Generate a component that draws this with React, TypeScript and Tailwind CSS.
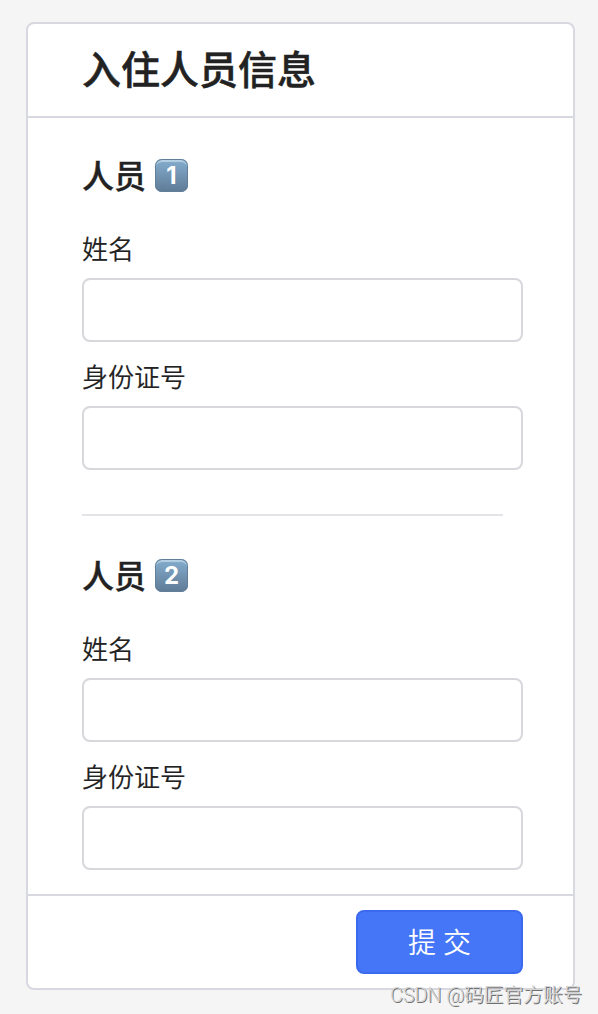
import React from "react";

function Keycap({ n }: { n: number }) {
  return (
    <span className="mt-px flex h-[33px] w-[33px] items-center justify-center rounded-[7px] bg-linear-to-b from-[#7fa6c6] from-15% to-[#5f7b96] pt-px font-['Inter',sans-serif] text-[24px] leading-none font-bold text-white shadow-[inset_0_0_0_1px_#627f9a,inset_0_3px_1px_#b4d0e2] [-webkit-text-stroke:0]">
      {n}
    </span>
  );
}

function Field({ label }: { label: string }) {
  return (
    <label className="block h-32">
      <span className="block h-[50px] pt-[2px] text-[26px] leading-[36px] font-[350] [-webkit-text-stroke:0.15px]">{label}</span>
      <input className="block h-16 w-[441px] rounded-lg border-2 border-[#d7d7dc] bg-white px-4 text-[26px] outline-none" />
    </label>
  );
}

function Person({ n }: { n: number }) {
  return (
    <section>
      <h2 className="flex h-[70px] items-start gap-[9px] text-[32px] font-medium [-webkit-text-stroke:0.4px]">
        <span className="-mt-px leading-[34px]">人员</span>
        <Keycap n={n} />
      </h2>
      <Field label="姓名" />
      <Field label="身份证号" />
    </section>
  );
}

export default function App() {
  return (
    <div className="relative h-[1014px] w-[598px] bg-[#f5f5f5] pt-[22px] pl-[26px] font-['Noto_Sans_CJK_SC',sans-serif] text-[#222]">
      <main className="flex h-[968px] w-[549px] flex-col rounded-lg border-2 border-[#d7d8e0] bg-white">
        <header className="h-[94px] border-b-2 border-[#d7d8e0] pt-[18px] pl-[54px]">
          <h1 className="text-[39px] leading-[50px] font-medium [-webkit-text-stroke:0.5px]">入住人员信息</h1>
        </header>
        <div className="flex-1 pt-[40px] pl-[54px]">
          <Person n={1} />
          <hr className="mt-[30px] mb-[42px] w-[421px] border-t-2 border-[#e3e3e8]" />
          <Person n={2} />
        </div>
        <footer className="flex h-[94px] justify-end border-t-2 border-[#d7d8e0] pt-[14px] pr-[50px]">
          <button className="h-16 w-[167px] rounded-lg border-2 border-[#3b6af0] bg-[#4576f8] pb-[2px] text-[28px] font-[350] text-white [word-spacing:1px]">提 交</button>
        </footer>
      </main>
      <p className="absolute top-[982px] left-[390px] font-['Roboto','Noto_Sans_CJK_SC',sans-serif] text-[19.7px] leading-[28px] font-[350] whitespace-nowrap text-[#d6d6d6] [text-shadow:1px_1px_0_#707070]">CSDN @码匠官方账号</p>
    </div>
  );
}
